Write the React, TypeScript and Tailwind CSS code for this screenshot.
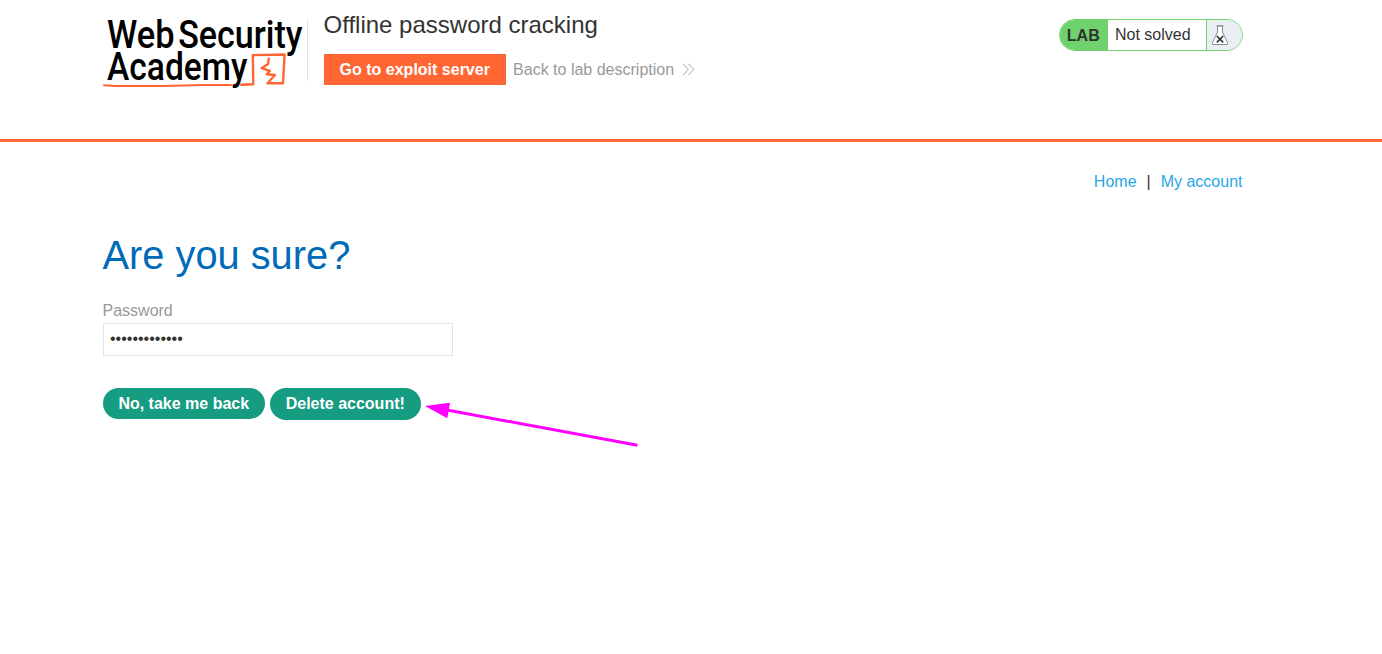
function Logo() {
  return (
    <svg width="204" height="92" viewBox="0 0 204 92" className="block shrink-0 overflow-visible" fill="none" aria-label="Web Security Academy">
      <g fill="#000" fontFamily="Roboto, 'Liberation Sans', sans-serif" fontSize="38" fontWeight="500">
        <text x="4" y="47.6" textLength="67.5" lengthAdjust="spacingAndGlyphs">Web</text>
        <text x="75.2" y="47.6" textLength="124.3" lengthAdjust="spacingAndGlyphs">Security</text>
        <text x="4" y="80" textLength="140.5" lengthAdjust="spacingAndGlyphs">Academy</text>
      </g>
      <g stroke="#ff6633" strokeLinejoin="round" strokeLinecap="round">
        <path d="M138 84.7L150.3 84.2L149.8 55.2L181.6 54.5L180 83.2L164.5 83.2L172 75L163.8 74.2L166.8 70.9L158.6 68.2L165 64L165.8 58.7" strokeWidth="2.4" />
        <path d="M1 85.3L12 86L60 86L100 85L128 85" strokeWidth="2" />
      </g>
    </svg>
  );
}

function Flask() {
  return (
    <svg width="18" height="22" viewBox="0 0 18 22" fill="none" className="block">
      <path d="M6.5 2V8L1.5 18.5V20.5H16.5V18.5L11.5 8V2Z" fill="#fff" stroke="#8c8c8c" />
      <path d="M5.5 1.8H12.5" stroke="#8c8c8c" />
      <path d="M5.8 12L12.2 18.4M12.2 12L5.8 18.4" stroke="#333" strokeWidth="1.7" />
    </svg>
  );
}

export default function App() {
  return (
    <div className="relative h-[654px] overflow-hidden bg-white font-['Liberation_Sans',Arial,sans-serif] text-base text-[#333332]">
      <header className="h-[142px] border-b-[3px] border-[#ff6633]">
        <div className="ml-[102.5px] flex w-[1140px] items-start">
          <Logo />
          <div className="mt-[19px] h-[62px] w-px bg-[#e4e4e4]" />
          <div className="ml-4 flex flex-col">
            <h2 className="mt-[9px] text-2xl leading-8">Offline password cracking</h2>
            <div className="mt-[13px] flex items-center">
              <a className="flex h-[31px] w-[182px] items-center justify-center bg-[#ff6633] pl-[0.5px] font-bold text-white">Go to exploit server</a>
              <a className="ml-[7.6px] text-[#999999]">Back to lab description</a>
              <svg width="13" height="14" viewBox="0 0 13 14" fill="none" stroke="#999" strokeWidth="0.9" className="ml-2">
                <path d="M1 0.8L6.3 6.5L1 12.2M6.5 0.8L11.8 6.5L6.5 12.2" />
              </svg>
            </div>
          </div>
          <div className="mt-[19px] ml-auto flex h-8 w-[184px] overflow-hidden rounded-full border border-[#70d26d]">
            <span className="w-12 bg-[#70d26d] pl-[7.3px] leading-[31px] font-bold">LAB</span>
            <span className="w-[98px] pl-[7.5px] leading-[29px]">Not solved</span>
            <span className="flex flex-1 items-center border-l border-[#70d26d] bg-[#e9eef2] pl-1">
              <Flask />
            </span>
          </div>
        </div>
      </header>

      <main className="ml-[102.5px] w-[1140px]">
        <nav className="flex justify-end gap-[10px] pt-7 leading-6">
          <a className="text-[#29a7e5]">Home</a>
          <span className="text-[#4b1d2b]">|</span>
          <a className="text-[#29a7e5]">My account</a>
        </nav>
        <h1 className="mt-[35px] text-[39.8px] leading-[52px] text-[#006bb8]">Are you sure?</h1>
        <form className="mt-[18px]">
          <label htmlFor="password" className="block leading-6 text-[#999999]">Password</label>
          <input
            id="password"
            type="password"
            defaultValue="montoya-peter"
            className="block h-[33px] w-[350px] border border-[#e4e4e4] px-[6.5px] pb-0.5 outline-none"
          />
          <div className="mt-8 flex items-start gap-[5px] font-bold text-white">
            <button type="button" className="h-[31px] w-[162px] rounded-full bg-[#169c80] pl-[0.5px]">No, take me back</button>
            <button type="button" className="h-8 w-[151px] rounded-full bg-[#169c80] pl-[0.5px]">Delete account!</button>
          </div>
        </form>
      </main>

      <svg width="214" height="46" viewBox="0 0 214 46" className="absolute top-[402px] left-[425px]">
        <path d="M22 8L212.5 43.3" stroke="#ff00ff" strokeWidth="3" />
        <path d="M0 4L25 0.7L22.3 16.3Z" fill="#ff00ff" />
      </svg>
    </div>
  );
}
